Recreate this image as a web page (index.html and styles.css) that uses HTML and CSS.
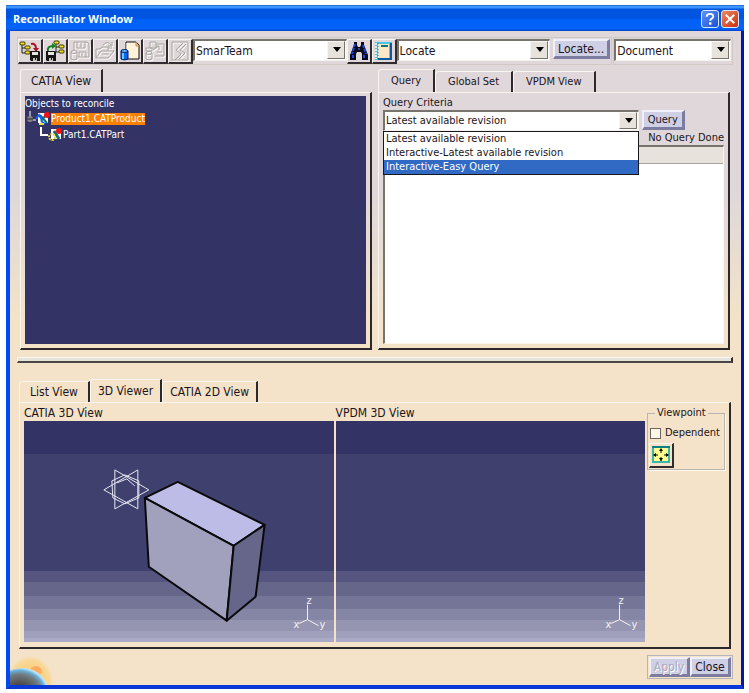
FILE: index.html
```html
<!DOCTYPE html>
<html lang="en">
<head>
<meta charset="utf-8">
<title>Reconciliator Window</title>
<link rel="stylesheet" href="styles.css">
</head>
<body>
<svg class="defs" aria-hidden="true">
  <defs>
    <symbol id="tree" viewBox="0 0 12 15">
      <path d="M3 4v8h5M3 7h5" fill="none" stroke="#222" stroke-width="1"/>
      <g fill="#f0e020" stroke="#3c3800" stroke-width="1">
        <rect x="1" y="1" width="5" height="3" rx="1"/>
        <rect x="6" y="5" width="5" height="3" rx="1"/>
        <rect x="6" y="10" width="5" height="3" rx="1"/>
      </g>
    </symbol>
    <symbol id="floppy" viewBox="0 0 10 10">
      <path d="M0 0h9l1 1v9H1L0 9z" fill="#161616"/>
      <path d="M2 1h6v3H2z" fill="#e8e4e0"/>
      <path d="M3 7h4v3H3z" fill="#c8c4c0"/>
      <path d="M5 7h1v2H5z" fill="#161616"/>
    </symbol>
    <symbol id="axes" viewBox="0 0 36 36">
      <path d="M17 25V10M17 25l11 6M17 25l-9 4" fill="none" stroke="#f2f2f6" stroke-width="1"/>
      <text x="16" y="9">z</text><text x="3" y="33">x</text><text x="29" y="33">y</text>
    </symbol>
  </defs>
</svg>

<div class="window">
  <header class="titlebar">
    <h1>Reconciliator Window</h1>
    <button class="sys" type="button" aria-label="Help">
      <svg viewBox="0 0 17 17"><path d="M5 6q0-3 3.500-3t3.500 2.800q0 1.500-2 2.500-1.200.7-1.200 2" fill="none" stroke="#fff" stroke-width="2"/><rect x="7.500" y="12" width="2.500" height="2.500" fill="#fff"/></svg>
    </button>
    <button class="sys sys-close" type="button" aria-label="Close window">
      <svg viewBox="0 0 17 17"><path d="M4 4l9 9M13 4l-9 9" stroke="#fff" stroke-width="2"/></svg>
    </button>
  </header>

  <main class="content">
    <div class="toolbar">
      <div class="group group-main">
        <button class="tool" type="button" aria-label="Load from tree">
          <svg viewBox="0 0 22 22"><use href="#tree" x="0" y="1" width="12" height="15"/><path d="M12 4q5-1 5 5" fill="none" stroke="#b01020" stroke-width="2"/><path d="M14 8h6l-3 4z" fill="#b01020"/><use href="#floppy" x="11" y="11" width="10" height="10"/></svg>
        </button>
        <button class="tool" type="button" aria-label="Save to tree">
          <svg viewBox="0 0 22 22"><use href="#tree" x="9" y="0" width="12" height="15"/><path d="M4 11q-1-5 5-5" fill="none" stroke="#108020" stroke-width="2"/><path d="M8 3v6l4-3z" fill="#108020"/><use href="#floppy" x="2" y="11" width="10" height="10"/></svg>
        </button>
        <button class="tool" type="button" disabled aria-label="Save">
          <svg viewBox="0 0 22 22" class="ghost"><path d="M5 2h13l2 2v13H9M5 2v9M8 2v6h8V2M12 3v4M10 17v-5h7v5M13 13v3"/><ellipse cx="5" cy="12" rx="3" ry="1.500"/><path d="M2 12v7q3 2 6 0v-7"/></svg>
        </button>
        <button class="tool" type="button" disabled aria-label="Open">
          <svg viewBox="0 0 22 22" class="ghost"><path d="M2 18V9h4l2-2h6v4M2 18l5-7h13l-6 7zM9 5q5-5 8 0M18 2v4h-4M8 14h7M14 8h4"/></svg>
        </button>
        <button class="tool" type="button" aria-label="Document storage">
          <svg viewBox="0 0 22 22"><path d="M7 2h10l3 3v14H7z" fill="#fff2d8" stroke="#111"/><path d="M8 3v15" stroke="#fff"/><path d="M17 2v4h3" fill="#e8c890" stroke="#b89050"/><path d="M2 11v8q3.500 2 7 0v-8z" fill="#0868e8" stroke="#001870"/><path d="M4 12v7" stroke="#70c8ff" stroke-width="2"/><ellipse cx="5.500" cy="11" rx="3.500" ry="1.500" fill="#60b8ff" stroke="#001870"/></svg>
        </button>
        <button class="tool" type="button" disabled aria-label="Transfer">
          <svg viewBox="0 0 22 22" class="ghost"><path d="M6 2h6v6H6zM12 4h8v12h-9M9 10l6-4M15 6v4M12 6h3M13 12h5M2 8h6v3H2z"/><ellipse cx="5" cy="13" rx="3" ry="1.500"/><path d="M2 13v6q3 2 6 0v-6"/></svg>
        </button>
        <button class="tool" type="button" disabled aria-label="Update">
          <svg viewBox="0 0 22 22" class="ghost"><path d="M3 2h16v18H3zM14 3l-7 7 5 4-6 6M17 4l-6 6 5 3-6 6"/></svg>
        </button>
        <span class="combo"><select aria-label="Data source"><option>SmarTeam</option></select></span>
        <button class="tool" type="button" aria-label="Find">
          <svg viewBox="0 0 22 22"><path d="M6 2h3v3l1 2h2l1-2V2h3v3l4 10v5h-6v-6l-1-2h-4l-1 2v6H2v-5L6 5z" fill="#080818"/><path d="M7 4L4 14M15 5l3 9M5 15v4M16 15v4" stroke="#1848e0" stroke-width="2" stroke-dasharray="3 1"/><path d="M10 9h2" stroke="#5090ff"/></svg>
        </button>
        <button class="tool" type="button" aria-label="Catalog">
          <svg viewBox="0 0 22 22"><rect x="2" y="2" width="17" height="18" fill="#48c8e0"/><path d="M18 3v16H5" fill="none" stroke="#1058a0" stroke-width="2"/><rect x="5" y="4" width="11" height="14" fill="#fce8c8"/><rect x="8" y="5" width="7" height="2" fill="#087878"/><path d="M3 3v16" stroke="#c8f4fc" stroke-width="2" stroke-dasharray="2 1"/><path d="M5 3v16" stroke="#087878" stroke-width="1" stroke-dasharray="1 2"/></svg>
        </button>
        <span class="combo"><select aria-label="Action"><option>Locate</option></select></span>
        <button class="push" type="button">Locate...</button>
      </div>
      <div class="group group-doc">
        <span class="combo"><select aria-label="Object type"><option>Document</option></select></span>
      </div>
    </div>

    <div class="upper">
      <section class="pane">
        <div class="tabs" role="tablist">
          <button class="tab tab-wide active" role="tab" aria-selected="true" type="button">CATIA View</button>
        </div>
        <div class="panel">
          <div class="tree">
            <p>Objects to reconcile</p>
            <div class="node">
              <svg viewBox="0 0 26 16"><path d="M5 0v7M8 9h3" stroke="#fff" stroke-width="1"/><circle cx="5" cy="8" r="3" fill="#84847c"/><path d="M2 8h6" stroke="#222"/><path d="M13 2h10v10H13z" fill="#fff"/><path d="M15 4l7 8M16 10l5-6" stroke="#107070" stroke-width="2"/><path d="M11 8l3-4 3 5M16 10l4 3" fill="none" stroke="#1060ff" stroke-width="2"/><path d="M14 13h5" stroke="#e8e030" stroke-width="2"/><circle cx="22" cy="4" r="3" fill="#f01018"/></svg>
              <span class="selected">Product1.CATProduct</span>
            </div>
            <div class="node child">
              <svg viewBox="0 0 26 16"><path d="M4 0v8h7" fill="none" stroke="#fff" stroke-width="2"/><path d="M14 2h10v10H14z" fill="#fff"/><path d="M17 4l5 8" stroke="#107070" stroke-width="3"/><circle cx="15" cy="10" r="3" fill="none" stroke="#e8d840" stroke-width="2" stroke-dasharray="2 1"/><circle cx="22" cy="4" r="3" fill="#f01018"/></svg>
              <span>Part1.CATPart</span>
            </div>
          </div>
        </div>
      </section>

      <section class="pane compact">
        <div class="tabs" role="tablist">
          <button class="tab tab-wide active" role="tab" aria-selected="true" type="button">Query</button>
          <button class="tab tab-wide" role="tab" type="button">Global Set</button>
          <button class="tab tab-wide" role="tab" type="button">VPDM View</button>
        </div>
        <div class="panel">
          <label for="criteria">Query Criteria</label>
          <div class="criteria">
            <span class="combo">
              <select id="criteria"><option>Latest available revision</option><option>Interactive-Latest available revision</option><option>Interactive-Easy Query</option></select>
            </span>
            <button class="push" type="button">Query</button>
            <ul class="menu" role="listbox" aria-label="Query Criteria">
              <li role="option">Latest available revision</li>
              <li role="option">Interactive-Latest available revision</li>
              <li role="option" aria-selected="true" class="picked">Interactive-Easy Query</li>
            </ul>
          </div>
          <p class="status">No Query Done</p>
          <div class="results"><div class="results-head"></div></div>
        </div>
      </section>
    </div>

    <div class="splitter" role="separator"></div>

    <section class="pane lower">
      <div class="tabs" role="tablist">
        <button class="tab tab-wide" role="tab" type="button">List View</button>
        <button class="tab active" role="tab" aria-selected="true" type="button">3D Viewer</button>
        <button class="tab" role="tab" type="button">CATIA 2D View</button>
      </div>
      <div class="panel viewers">
        <figure>
          <figcaption>CATIA 3D View</figcaption>
          <svg class="scene" viewBox="0 0 310 221">
            <g fill="none" stroke="#e6e6f2" stroke-width="1">
              <path d="M91 49l34 20-34 19zM114 49L80 69l34 19z"/>
              <path d="M88 60l13-6 14 6v17l-14 6-12-6zM93 62l10-4 8 7"/>
            </g>
            <g stroke="#0a0a0c" stroke-width="2" stroke-linejoin="round">
              <path d="M121 77l33-16 87 43-31 21z" fill="#bcbce6"/>
              <path d="M121 77l89 48-7 75-78-54z" fill="#a1a1bd"/>
              <path d="M210 125l31-21-9 72-29 24z" fill="#66668a"/>
            </g>
            <use href="#axes" x="267" y="174" width="36" height="36"/>
          </svg>
        </figure>
        <figure>
          <figcaption>VPDM 3D View</figcaption>
          <svg class="scene" viewBox="0 0 310 221"><use href="#axes" x="267" y="174" width="36" height="36"/></svg>
        </figure>
        <fieldset class="viewpoint compact">
          <legend>Viewpoint</legend>
          <label class="check"><input type="checkbox">Dependent</label>
          <button class="tool" type="button" aria-label="Fit all in">
            <svg viewBox="0 0 22 22"><rect x="3" y="3" width="16" height="15" fill="#fcfc90" stroke="#38b8a8" stroke-width="2"/><path d="M2 3h18" stroke="#108080" stroke-width="2"/><path d="M11 5v4M11 13v4M4 11h4M14 11h4" stroke="#080808" stroke-width="1"/><path d="M9 7l2-3 2 3zM9 14l2 3 2-3zM6 9l-3 2 3 2zM16 9l3 2-3 2z" fill="#080808"/></svg>
          </button>
        </fieldset>
      </div>
    </section>

    <footer class="actions">
      <div class="action-group">
        <button class="push" type="button" disabled>Apply</button>
        <button class="push" type="button">Close</button>
      </div>
    </footer>

    <svg class="globe" viewBox="0 0 44 30" aria-hidden="true">
      <defs>
        <radialGradient id="halo"><stop offset="0.500" stop-color="#fbcf80"/><stop offset="0.850" stop-color="#f8d898"/><stop offset="1" stop-color="#f8deb0" stop-opacity="0.400"/></radialGradient>
        <radialGradient id="earth" cx="0.450" cy="0.550" r="0.550"><stop offset="0.300" stop-color="#484440"/><stop offset="0.750" stop-color="#707c80"/><stop offset="0.900" stop-color="#68acd8"/><stop offset="1" stop-color="#c0e8f4"/></radialGradient>
      </defs>
      <ellipse cx="20" cy="28" rx="23" ry="27" fill="url(#halo)"/>
      <ellipse cx="26" cy="16" rx="6" ry="5" fill="#ffac60"/>
      <ellipse cx="12" cy="36" rx="26" ry="23" fill="url(#earth)"/>
    </svg>
  </main>
</div>
</body>
</html>
```

FILE: styles.css
```css
* { box-sizing: border-box; }

body {
  margin: 0;
  min-height: 100vh;
  padding: 5px 5px 4px 6px;
  display: flex;
  background: #fff;
  color: #1c1420;
  font: 12px/14px "DejaVu Sans Condensed", "DejaVu Sans", sans-serif;
}

h1, p, ul, figure { margin: 0; padding: 0; }
button, select, input { font: inherit; color: inherit; margin: 0; }
.compact { font-size: 11px; }
.defs { position: absolute; width: 0; height: 0; }

.window {
  flex: 1;
  display: flex;
  flex-direction: column;
  border: solid #0838d8;
  border-width: 0 3px 4px 4px;
  border-right-color: #0018a8;
  border-left-color: #0048f0;
}

.titlebar {
  display: flex;
  align-items: center;
  gap: 2px;
  height: 26px;
  margin: 0 -3px 0 -4px;
  padding: 2px 5px 0 7px;
  background: linear-gradient(#2a70d8 0 1px, #3c94ff 1px 3px, #0054e0 4px 13px, #0062f8 15px 24px, #0040c0);
}
.titlebar h1 {
  flex: 1;
  color: #fff;
  font: bold 11px/16px "Open Sans", "Noto Sans", sans-serif;
}
.sys {
  width: 18px;
  height: 18px;
  padding: 0;
  border: 1px solid #d8e8ff;
  border-radius: 3px;
  background: linear-gradient(135deg, #5c94f8, #1c50d0);
}
.sys-close { background: linear-gradient(135deg, #f08860, #c83010); }
.sys svg { display: block; }

.content {
  position: relative;
  flex: 1;
  display: flex;
  flex-direction: column;
  padding: 6px 8px 6px 7px;
  background: linear-gradient(#dfd7da 0 160px, #f4e3c8 290px);
}

.toolbar { display: flex; gap: 1px; }
.group {
  display: flex;
  height: 28px;
  padding: 1px 1px 1px 0;
  border: 1px solid #c6bdb8;
  border-top-color: #f6f2ee;
  border-left-color: #f6f2ee;
  outline: 1px solid #d0c8c4;
  outline-offset: -1px;
}
.group-main { flex: 598 1 0; }
.group-doc { flex: 118 1 0; }
.group .combo { flex: 1; height: 22px; }
.group .push { width: 57px; height: 20px; margin-left: 3px; }

.tool {
  flex: none;
  width: 25px;
  height: 25px;
  padding: 0;
  background: transparent;
  border: solid #f8f4f0;
  border-width: 1px 2px 2px 1px;
  border-right-color: #302c30;
  border-bottom-color: #302c30;
}
.tool svg { display: block; width: 22px; height: 22px; }
.ghost { fill: none; stroke: #a8a49e; stroke-width: 1; filter: drop-shadow(1px 1px 0 #fff); }

.combo { position: relative; display: flex; min-width: 0; }
.combo select {
  flex: 1;
  min-width: 0;
  padding: 0 20px 0 1px;
  appearance: none;
  border: 2px solid #77746e;
  border-right: 1px solid #f4f0ec;
  border-bottom: 1px solid #f4f0ec;
  border-radius: 0;
  background: #fff;
}
.combo::before {
  content: "";
  position: absolute;
  right: 2px;
  top: 2px;
  bottom: 2px;
  width: 16px;
  background: #e8e2dc;
  border: 1px solid #f8f6f2;
  border-right-color: #77746e;
  border-bottom-color: #77746e;
  pointer-events: none;
}
.combo::after {
  content: "";
  position: absolute;
  right: 6px;
  top: 8px;
  border: 4px solid transparent;
  border-top: 5px solid #000;
  border-bottom: 0;
  pointer-events: none;
}

.push {
  padding: 0;
  background: #cfcfe6;
  border: 2px solid #f0f0fa;
  border-right: 3px solid #7c7ca0;
  border-bottom: 3px solid #7c7ca0;
  border-radius: 0;
}
.push:disabled { color: #aaaabc; text-shadow: 1px 1px 0 #fff; }

.upper {
  flex: 287 1 0;
  display: grid;
  grid-template-columns: 1fr 1fr;
  gap: 6px;
  padding: 5px 3px 0;
}
.pane { display: flex; flex-direction: column; min-width: 0; }
.tabs { display: flex; align-items: flex-end; height: 22px; font-size: 12px; }
.compact .tabs { font-size: 11px; }
.tab {
  height: 21px;
  padding: 0 7px;
  background: transparent;
  border: 1px solid #f8f4ee;
  border-right: 2px solid #2c282c;
  border-bottom: 0;
  border-radius: 3px 0 0 0;
}
.tab.active { height: 23px; }
.tab-wide { padding: 0 10px; }
.compact .tab-wide { padding: 0 12px; }
.panel {
  flex: 1;
  display: flex;
  flex-direction: column;
  padding: 3px 4px 4px;
  border: 1px solid #f8f4ee;
  border-right: 2px solid #2c282c;
  border-bottom: 2px solid #2c282c;
}

.tree {
  flex: 1;
  padding-top: 1px;
  background: #333366;
  color: #fff;
  font-size: 10px;
}
.node { display: flex; align-items: center; height: 16px; }
.node svg { width: 26px; height: 16px; }
.child { padding-left: 12px; }
.selected { background: #ff8000; line-height: 12px; }

.criteria { position: relative; display: flex; gap: 3px; }
.criteria .combo { width: 75%; height: 21px; }
.criteria .push { width: 43px; height: 20px; }
.menu {
  position: absolute;
  z-index: 1;
  top: 21px;
  left: 0;
  width: 75%;
  border: 1px solid #18181c;
  background: #fff;
  list-style: none;
}
.menu li { padding: 0 2px; line-height: 14px; }
.menu .picked { background: #316ac5; color: #fff; }
.status { text-align: right; }
.results {
  flex: 1;
  background: #fff;
  border: 1px solid #fbf5ec;
  border-top: 2px solid #77746e;
  border-left: 2px solid #77746e;
}
.results-head { height: 17px; background: #e8e2dc; border-bottom: 1px solid #a8a29c; }

.splitter {
  height: 6px;
  margin-top: 7px;
  background: #e6e2dc;
  border: 1px solid #fbf7f0;
  border-right: 2px solid #302c30;
  border-bottom: 2px solid #4c4644;
}

.lower { flex: 269 1 0; margin-top: 17px; padding: 0 2px; }
.viewers { flex-direction: row; gap: 2px; padding: 3px 4px 5px; }
.viewers figure { flex: 1; display: flex; flex-direction: column; min-width: 0; }
figcaption { line-height: 15px; }
.scene {
  display: block;
  flex: 1;
  width: 100%;
  min-height: 0;
  background: linear-gradient(#333366 0 15%, #40406f 15% 68%, #555580 68% 73%, #66668a 73% 79%, #757598 79% 85%, #8585a5 85% 90%, #9595b1 90% 95%, #a0a0bd 95% 98%, #a9a9c5 98%);
}
#axes text { fill: #f2f2f6; font-size: 11px; }

.viewpoint {
  width: 78px;
  height: 64px;
  min-width: 0;
  margin: 0;
  padding: 5px 0 0 1px;
  border: 1px solid #b8b4b0;
  box-shadow: 1px 1px 0 #fff8ec;
}
.viewpoint legend { margin-left: 6px; padding: 0 2px; line-height: 14px; }
.check { display: flex; align-items: center; gap: 4px; height: 16px; margin-bottom: 2px; }
.check input {
  appearance: none;
  width: 11px;
  height: 11px;
  margin-left: 1px;
  border: 1px solid #6c6660;
  background: #fdf5e6;
}

.actions { display: flex; justify-content: flex-end; margin-top: 6px; }
.action-group { display: flex; padding: 1px; border: 1px solid #b8b4bc; }
.action-group .push { width: 41px; height: 20px; }

.globe { position: absolute; left: 0; bottom: 0; width: 44px; height: 30px; }
```
